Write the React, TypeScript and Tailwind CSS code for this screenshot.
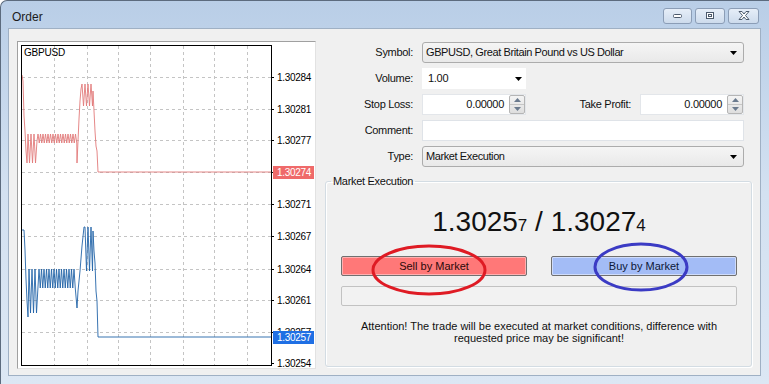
import type { ReactNode } from 'react'

// chart geometry is in page pixels (the svg's viewBox starts at the panel's inner corner)
const GRID_Y = [76, 108, 139, 171, 203, 235, 268, 299, 331]
const GRID_X = [53, 86, 117, 149, 182, 213, 246]
const AXIS = [
  { y: 76, v: '1.30284' },
  { y: 108, v: '1.30281' },
  { y: 139, v: '1.30277' },
  { y: 203, v: '1.30271' },
  { y: 235, v: '1.30267' },
  { y: 268, v: '1.30264' },
  { y: 299, v: '1.30261' },
  { y: 331, v: '1.30257' },
  { y: 362, v: '1.30254' },
]

const toPoints = (p: [number, number][]) => p.map(([x, y]) => `${x},${y}`).join(' ')

// thin zigzag between two levels, one tooth every `step` px
function zigzag(p: [number, number][], from: number, to: number, hi: number, lo: number, step = 3) {
  for (let x = from; x <= to; x += step) {
    p.push([x, hi], [x + step / 2, lo])
  }
}

function askSeries() {
  const p: [number, number][] = [[21, 74], [22, 80], [23, 115], [24, 130], [25, 150], [26, 162]]
  zigzag(p, 27, 35, 133, 162, 3)
  p.push([36, 140])
  zigzag(p, 37, 75, 133, 142, 2.5)
  p.push([76, 162], [77, 140], [78, 118], [79, 100], [80, 88])
  zigzag(p, 81, 90, 83, 105, 3)
  p.push([92, 90], [93, 110], [94, 130], [95, 145], [96, 150], [97, 171], [270, 171])
  return toPoints(p)
}

function bidSeries() {
  const p: [number, number][] = [[21, 229], [23, 229], [24, 249], [25, 278], [26, 300], [27, 316]]
  zigzag(p, 28, 36, 268, 312, 3)
  zigzag(p, 38, 75, 268, 287, 2.5)
  p.push([76, 307], [77, 290], [79, 270], [81, 245], [83, 226])
  zigzag(p, 84, 90, 226, 270, 3)
  p.push([92, 230], [93, 250], [94, 262], [95, 290], [96, 300], [97, 336], [270, 336])
  return toPoints(p)
}

function Chart() {
  return (
    <div className="w-[299px] h-[328px] shrink-0 border border-[#a0a0a0] border-r-[#e2e2e2] border-b-[#e2e2e2] bg-white">
      <svg width="297" height="326" viewBox="17 41 297 326" className="block">
        <g stroke="#c4c4c4" strokeDasharray="3 3" shapeRendering="crispEdges">
          {GRID_Y.map((y) => (
            <line key={y} x1="21" x2="270" y1={y + 0.5} y2={y + 0.5} />
          ))}
          {GRID_X.map((x) => (
            <line key={x} x1={x + 0.5} x2={x + 0.5} y1="45" y2="364" />
          ))}
        </g>
        <polyline points={askSeries()} fill="none" stroke="#e27a7a" strokeWidth="0.9" strokeLinejoin="round" />
        <polyline points={bidSeries()} fill="none" stroke="#2364a8" strokeWidth="0.9" strokeLinejoin="round" />
        <rect x="20.5" y="44.5" width="250" height="320" fill="none" stroke="#000" shapeRendering="crispEdges" />
        <g fill="#000" shapeRendering="crispEdges">
          {[...GRID_Y, 362].map((y) => (
            <rect key={y} x="271" y={y} width="2" height="1" />
          ))}
        </g>
        <text x="23" y="55" fontSize="10" letterSpacing="-0.2" fill="#000">GBPUSD</text>
        {AXIS.map((a) => (
          <text key={a.y} x="276" y={a.y + 4} fontSize="10" letterSpacing="-0.3" fill="#000">
            {a.v}
          </text>
        ))}
        <rect x="272" y="165" width="41" height="13" fill="#ef6a6a" />
        <text x="276" y="175" fontSize="10" letterSpacing="-0.3" fill="#fff">1.30274</text>
        <rect x="272" y="330" width="41" height="13" fill="#1f6fe4" />
        <text x="276" y="340" fontSize="10" letterSpacing="-0.3" fill="#fff">1.30257</text>
      </svg>
    </div>
  )
}

function Caret() {
  return (
    <svg width="7" height="4" viewBox="0 0 7 4" className="shrink-0">
      <path d="M0 0h7L3.5 4z" fill="#000" />
    </svg>
  )
}

function Spinner() {
  return (
    <div className="w-[16px] h-full flex flex-col border border-[#b5b5b5] rounded-[2px] bg-linear-to-b from-[#f4f4f4] to-[#dedede]">
      <div className="flex-1 flex items-center justify-center border-b border-[#c6c6c6]">
        <svg width="7" height="4" viewBox="0 0 7 4"><path d="M0 4h7L3.5 0z" fill="#6a7a8e" /></svg>
      </div>
      <div className="flex-1 flex items-center justify-center">
        <svg width="7" height="4" viewBox="0 0 7 4"><path d="M0 0h7L3.5 4z" fill="#6a7a8e" /></svg>
      </div>
    </div>
  )
}

function Row({ label, children }: { label: string; children: ReactNode }) {
  return (
    <div className="flex items-center h-[21px]">
      <span className="w-[88px] text-right">{label}</span>
      <div className="ml-[9px] flex-1 flex h-full items-stretch">{children}</div>
    </div>
  )
}

function Combo({ value }: { value: string }) {
  return (
    <div className="flex-1 flex items-center border border-[#acacac] rounded-[3px] bg-linear-to-b from-[#f5f5f5] to-[#e9e9e9] pl-[3px] pr-[6px]">
      <span className="flex-1 tracking-[-0.4px]">{value}</span>
      <Caret />
    </div>
  )
}

function NumberBox() {
  return (
    <div className="w-[104px] flex items-center bg-white border border-[#e3e6ea]">
      <span className="flex-1 text-right pr-[5px]">0.00000</span>
      <Spinner />
    </div>
  )
}

function TitleButton({ w, children }: { w: string; children: ReactNode }) {
  return (
    <div className={`${w} h-[16px] flex items-center justify-center rounded-[3px] border border-[#8b9db6] bg-linear-to-b from-[#e6eef8] to-[#cddbec]`}>
      {children}
    </div>
  )
}

export default function App() {
  return (
    <div className="relative w-[769px] h-[384px] overflow-hidden rounded-tl-[7px] border-l border-t border-[#5c6b7e] bg-linear-to-b from-[#b9cee7] via-[#d3e1f1] to-[#dce7f4] font-['Liberation_Sans',Arial,sans-serif] text-[11px] tracking-[-0.3px] text-[#111]">
      {/* Title bar */}
      <div className="h-[27px] flex items-center pl-[11px] pr-[10px]">
        <span className="text-[12px] tracking-normal text-[#1b1b1b] pt-[4px] flex-1">Order</span>
        <div className="flex items-center gap-[3px] pt-[2px]">
          <TitleButton w="w-[29px]">
            <svg width="9" height="4" viewBox="0 0 9 4"><rect x="0.5" y="0.5" width="8" height="3" rx="1" fill="#fff" stroke="#4c5a6c" /></svg>
          </TitleButton>
          <TitleButton w="w-[30px]">
            <svg width="8" height="7" viewBox="0 0 8 7"><rect x="0.5" y="0.5" width="7" height="6" fill="#fff" stroke="#4c5a6c" /><rect x="2.5" y="2.5" width="3" height="2" fill="none" stroke="#4c5a6c" /></svg>
          </TitleButton>
          <TitleButton w="w-[31px]">
            <svg width="12" height="9" viewBox="0 0 12 9"><path d="M1 .5h3L6 3l2-2.5h3L7.5 4.5 11 8.5H8L6 6 4 8.5H1l3.5-4z" fill="#fff" stroke="#4c5a6c" strokeLinejoin="round" /></svg>
          </TitleButton>
        </div>
      </div>

      {/* Client area */}
      <div className="ml-[7px] w-[753px] h-[348px] border border-[#9fb0c4] bg-[#f0f0f0] flex items-start gap-[9px] pl-[8px] pt-[12px]">
        <Chart />

        <div className="w-[427px] flex flex-col">
          <div className="flex flex-col gap-[5px] pt-[1px] pr-[8px]">
            <Row label="Symbol:">
              <Combo value="GBPUSD, Great Britain Pound vs US Dollar" />
            </Row>
            <Row label="Volume:">
              <div className="w-[104px] flex items-center bg-white pl-[6px] pr-[4px]">
                <span className="flex-1">1.00</span>
                <Caret />
              </div>
            </Row>
            <Row label="Stop Loss:">
              <NumberBox />
              <span className="flex-1 self-center text-right pr-[9px]">Take Profit:</span>
              <NumberBox />
            </Row>
            <Row label="Comment:">
              <div className="flex-1 bg-white border border-[#dfe3e8]" />
            </Row>
            <Row label="Type:">
              <Combo value="Market Execution" />
            </Row>
          </div>

          <fieldset className="mt-[8px] h-[192px] border border-[#d3dce3] rounded-[3px] shadow-[inset_1px_1px_0_#fff,1px_1px_0_#fff]">
            <legend className="ml-[5px] px-[2px] leading-[13px]">Market Execution</legend>
            <div className="flex flex-col pl-[15px] pr-[14px]">
              <div className="mt-[19px] h-[30px] flex items-baseline justify-center text-[28px] leading-[30px] tracking-normal text-[#111]">
                <span>1.3025</span>
                <span className="text-[17px]">7</span>
                <span className="whitespace-pre"> / </span>
                <span>1.3027</span>
                <span className="text-[17px]">4</span>
              </div>
              <div className="mt-[19px] grid grid-cols-2 gap-[24px] h-[20px] tracking-normal">
                <div className="flex items-center justify-center rounded-[2px] border border-[#707070] bg-[#ff7878] shadow-[inset_0_0_0_1px_#ffb0b0] text-[#2a0a0a]">
                  Sell by Market
                </div>
                <div className="flex items-center justify-center rounded-[2px] border border-[#707070] bg-[#a3bcf6] shadow-[inset_0_0_0_1px_#cfdcfb] text-[#0d1838]">
                  Buy by Market
                </div>
              </div>
              <div className="mt-[10px] h-[20px] rounded-[2px] border border-[#c2c2c2] bg-[#f2f2f2]" />
              <p className="mt-[14px] text-center leading-[12px] tracking-normal">
                Attention! The trade will be executed at market conditions, difference with
                <br />
                requested price may be significant!
              </p>
            </div>
          </fieldset>
        </div>
      </div>

      {/* hand-drawn annotations over the buttons */}
      <svg className="absolute left-[-1px] top-[-1px] pointer-events-none" width="769" height="384" viewBox="0 0 769 384">
        <ellipse cx="429" cy="270" rx="56" ry="24" fill="none" stroke="#df1b24" strokeWidth="3" />
        <ellipse cx="641" cy="267" rx="46" ry="23" fill="none" stroke="#3b3bc4" strokeWidth="3" />
      </svg>
    </div>
  )
}
